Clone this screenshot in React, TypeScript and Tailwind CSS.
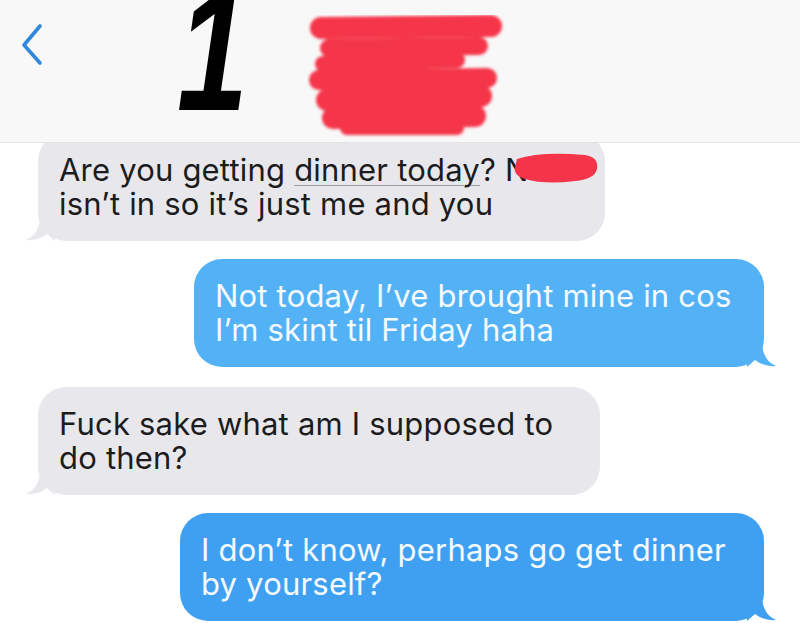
import { ReactNode } from 'react'

function Tail({ side, color }: { side: 'left' | 'right'; color: string }) {
  // little iMessage tail hanging off the bottom corner
  if (side === 'left') {
    return (
      <svg className="absolute bottom-0 left-[-13px]" width="30" height="26" viewBox="0 0 30 26">
        <path d="M15 0 Q15 19 1 25 Q13 26 22 19 L30 26 L30 0 Z" fill={color} />
      </svg>
    )
  }
  return (
    <svg className="absolute bottom-0 right-[-13px]" width="30" height="26" viewBox="0 0 30 26">
      <path d="M15 0 Q15 19 29 25 Q17 26 8 19 L0 26 L0 0 Z" fill={color} />
    </svg>
  )
}

function Bubble({
  side,
  width,
  color,
  children,
  className = '',
}: {
  side: 'left' | 'right'
  width: string
  color: string
  children: ReactNode
  className?: string
}) {
  const isLeft = side === 'left'
  return (
    <div className={`flex ${isLeft ? 'justify-start pl-[38px]' : 'justify-end pr-[36px]'} ${className}`}>
      <div
        className={`relative rounded-[28px] py-[20px] pl-[21px] pr-4 text-[31px] leading-[34px] tracking-[0.2px] ${width} ${
          isLeft ? 'text-[#1c1c1e]' : 'text-[#f4faff]'
        }`}
        style={{ backgroundColor: color }}
      >
        <Tail side={side} color={color} />
        <p className="relative whitespace-nowrap">{children}</p>
      </div>
    </div>
  )
}

function Scribble() {
  return (
    <svg width="200" height="130" viewBox="0 0 200 130" className="mt-[8px] ml-[58px]">
      <defs>
        <filter id="soft">
          <feGaussianBlur stdDeviation="1.4" />
        </filter>
      </defs>
      <g stroke="#f5344a" strokeLinecap="round" fill="none" filter="url(#soft)">
        <path d="M14 20 L184 18" strokeWidth="22" />
        <path d="M22 40 L172 38" strokeWidth="18" />
        <path d="M16 56 L150 52" strokeWidth="16" />
        <path d="M12 72 L180 70" strokeWidth="20" />
        <path d="M20 92 L174 88" strokeWidth="22" />
        <path d="M26 110 L168 108" strokeWidth="22" />
        <path d="M40 120 L150 120" strokeWidth="14" />
      </g>
    </svg>
  )
}

export default function App() {
  return (
    <div className="w-[800px] h-[623px] overflow-hidden bg-white" style={{ fontFamily: 'Inter, "Liberation Sans", sans-serif' }}>
      {/* Header */}
      <header className="relative z-10 flex h-[143px] items-start overflow-hidden border-b border-[#e2e2e2] bg-[#f8f8f8]">
        <svg width="26" height="46" viewBox="0 0 26 46" className="mt-[21px] ml-[19px]">
          <polyline points="21,5 5,24 21,42" fill="none" stroke="#2f88dc" strokeWidth="3.6" strokeLinecap="round" strokeLinejoin="round" />
        </svg>
        <span
          className="ml-[132px] mt-[-34px] w-[72px] origin-left scale-x-75 text-[170px] leading-none font-bold italic text-black"
          style={{ fontFamily: '"Liberation Sans", Arial, sans-serif' }}
        >
          1
        </span>
        <Scribble />
      </header>

      {/* Messages */}
      <div className="flex flex-col gap-[18px]">
        <Bubble side="left" width="w-[567px]" color="#e8e8ec" className="mt-[-10px]">
          Are you getting <span className="underline decoration-[#9a9aa0] decoration-1 underline-offset-4">dinner today</span>?{' '}
          <span className="relative">
            N
            <svg className="absolute left-[6px] top-[-2px]" width="92" height="38" viewBox="0 0 92 38">
              <path
                d="M6 10 Q30 2 74 6 Q88 8 86 20 Q84 30 64 32 Q34 36 14 30 Q2 26 4 18 Z"
                fill="#f5344a"
              />
            </svg>
          </span>
          <br />
          isn’t in so it’s just me and you
        </Bubble>

        <Bubble side="right" width="w-[570px]" color="#52b2f5">
          Not today, I’ve brought mine in cos
          <br />
          I’m skint til Friday haha
        </Bubble>

        <Bubble side="left" width="w-[562px]" color="#e8e8ec" className="mt-[2px]">
          Fuck sake what am I supposed to
          <br />
          do then?
        </Bubble>

        <Bubble side="right" width="w-[584px]" color="#3fa0f1">
          I don’t know, perhaps go get dinner
          <br />
          by yourself?
        </Bubble>
      </div>
    </div>
  )
}
